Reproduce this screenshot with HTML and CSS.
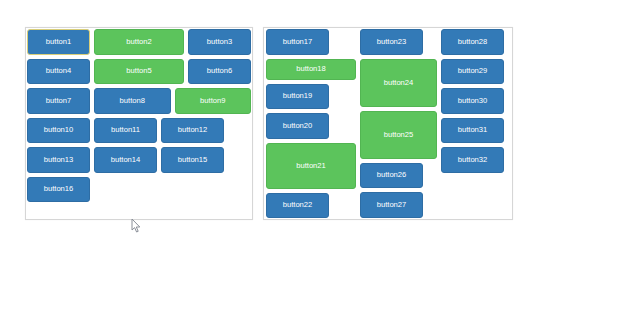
FILE: index.html
```html
<!DOCTYPE html>
<html lang="en">
<head>
    <meta charset="UTF-8">
    <title>flex buttons</title>
    <link rel="stylesheet" href="styles.css">
</head>
<body>
    <div class="demo">
        <!-- 横向换行 -->
        <div class="box box-row">
            <button class="btn btn-primary btn-focus">button1</button>
            <button class="btn btn-success grow">button2</button>
            <button class="btn btn-primary">button3</button>
            <button class="btn btn-primary">button4</button>
            <button class="btn btn-success grow">button5</button>
            <button class="btn btn-primary">button6</button>
            <button class="btn btn-primary">button7</button>
            <button class="btn btn-primary grow">button8</button>
            <button class="btn btn-success grow">button9</button>
            <button class="btn btn-primary">button10</button>
            <button class="btn btn-primary">button11</button>
            <button class="btn btn-primary">button12</button>
            <button class="btn btn-primary">button13</button>
            <button class="btn btn-primary">button14</button>
            <button class="btn btn-primary">button15</button>
            <button class="btn btn-primary">button16</button>
        </div>

        <!-- 纵向排列 -->
        <div class="box box-col">
            <div class="stack">
                <button class="btn btn-primary">button17</button>
                <button class="btn btn-success wide short">button18</button>
                <button class="btn btn-primary">button19</button>
                <button class="btn btn-primary">button20</button>
                <button class="btn btn-success wide tall">button21</button>
                <button class="btn btn-primary">button22</button>
            </div>
            <div class="stack">
                <button class="btn btn-primary">button23</button>
                <button class="btn btn-success mid taller">button24</button>
                <button class="btn btn-success mid taller">button25</button>
                <button class="btn btn-primary">button26</button>
                <button class="btn btn-primary">button27</button>
            </div>
            <div class="stack">
                <button class="btn btn-primary">button28</button>
                <button class="btn btn-primary">button29</button>
                <button class="btn btn-primary">button30</button>
                <button class="btn btn-primary">button31</button>
                <button class="btn btn-primary">button32</button>
            </div>
        </div>
    </div>

    <svg class="cursor" width="10" height="15" viewBox="0 0 10 15">
        <path d="M1 1 L1 12 L3.6 9.6 L5.6 14 L7.2 13.3 L5.3 9 L8.8 9 Z" fill="#fff" stroke="#8a8f98" stroke-width="1" stroke-linejoin="round"/>
    </svg>
</body>
</html>
```

FILE: styles.css
```css
* {
    margin: 0;
    padding: 0;
    box-sizing: border-box;
}

body {
    font-family: 'Liberation Sans', Arial, sans-serif;
    background: #fff;
    position: relative;
    width: 640px;
    height: 320px;
    overflow: hidden;
}

.demo {
    display: flex;
    align-items: flex-start;
    gap: 10px;
    padding: 27px 0 0 25px;
}

.box {
    height: 193px;
    border: 1px solid #d6d6d6;
    box-shadow: 0 0 1px rgba(0,0,0,0.08);
}

.box-row {
    width: 228px;
    display: flex;
    flex-wrap: wrap;
    align-content: flex-start;
    gap: 4px;
    padding: 1px;
}

.box-col {
    width: 250px;
    display: flex;
    align-items: flex-start;
    gap: 4px;
    padding: 1px 2px;
}

.stack {
    display: flex;
    flex-direction: column;
    align-items: flex-start;
    gap: 4px;
}

.btn {
    width: 63px;
    height: 25.5px;
    flex-shrink: 0;
    border: 1px solid transparent;
    border-radius: 3px;
    color: #fff;
    font-family: inherit;
    font-size: 7.6px;
    line-height: 1;
    text-align: center;
    cursor: pointer;
}

.btn-primary {
    background: #337ab7;
    border-color: #2e6da4;
}

.btn-success {
    background: #5cc45c;
    border-color: #52b552;
}

.btn-focus {
    border-color: #d9cf7a;
}

.grow { flex-grow: 1; }

.wide { width: 90px; }
.mid { width: 77px; }

.short { height: 21px; }
.tall { height: 46px; }
.taller { height: 48px; }

.cursor {
    position: absolute;
    left: 131px;
    top: 218px;
}
```
